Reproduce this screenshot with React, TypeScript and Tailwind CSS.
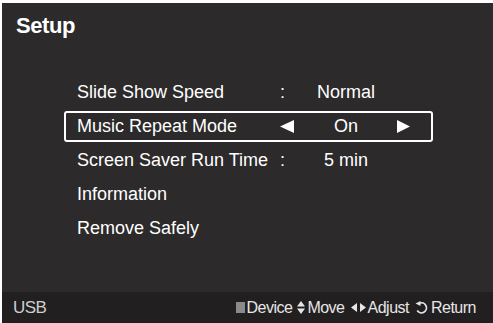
import React from "react";

const font = { fontFamily: '"Liberation Sans", Arial, sans-serif' };

function Row({ label, sep, value, selected }: { label: string; sep?: "colon" | "arrows"; value?: string; selected?: boolean }) {
  return (
    <div
      className={`flex h-[31px] items-center rounded-[3px] border-2 pl-[11px] ${selected ? "border-white" : "border-transparent"}`}
    >
      <div className="w-[203px] whitespace-nowrap">{label}</div>
      {sep === "colon" && <div className="w-[15px]">:</div>}
      {sep === "arrows" && (
        <div className="flex w-[15px] items-center">
          <svg width="15" height="13" viewBox="0 0 15 13">
            <polygon points="0,6.5 14,0 14,13" fill="white" />
          </svg>
        </div>
      )}
      {value && <div className="w-[102px] text-center">{value}</div>}
      {sep === "arrows" && (
        <div className="flex w-[13px] items-center">
          <svg width="13" height="13" viewBox="0 0 13 13">
            <polygon points="0,0 13,6.5 0,13" fill="white" />
          </svg>
        </div>
      )}
    </div>
  );
}

export default function App() {
  return (
    <div className="h-[323px] w-[493px] border-l-[2px] border-t-[3px] border-white" style={font}>
      <div className="flex h-[320px] flex-col bg-[#2c2a2b] text-white">
        <div className="h-[60px] pl-[14px] pt-[6px] text-[22px] font-bold tracking-[-0.4px]">Setup</div>
        <div className="ml-[62px] flex w-[369px] flex-col gap-[3px] pt-[14px] text-[18px]">
          <Row label="Slide Show Speed" sep="colon" value="Normal" />
          <Row label="Music Repeat Mode" sep="arrows" value="On" selected />
          <Row label="Screen Saver Run Time" sep="colon" value="5 min" />
          <Row label="Information" />
          <Row label="Remove Safely" />
        </div>
        <div className="flex-1" />
        <div className="flex h-[31px] items-center bg-[#221f20] pl-[11px] pr-[17px] text-[16px] tracking-[-0.5px] text-[#e6e6e6]">
          <div className="text-[17px] text-[#cfcfcf]">USB</div>
          <div className="flex-1" />
          <div className="flex items-center">
            <div className="mr-[1px] h-[11px] w-[9px] bg-[#8a8a8a]" />
            <span>Device</span>
            <svg className="ml-[5px] mr-[2px]" width="8" height="13" viewBox="0 0 8 13">
              <polygon points="4,0 8,5.5 0,5.5" fill="#e6e6e6" />
              <polygon points="0,7.5 8,7.5 4,13" fill="#e6e6e6" />
            </svg>
            <span>Move</span>
            <svg className="ml-[6px] mr-[1px]" width="16" height="9" viewBox="0 0 16 9">
              <polygon points="0,4.5 6,0 6,9" fill="#e6e6e6" />
              <polygon points="9,0 15,4.5 9,9" fill="#e6e6e6" />
            </svg>
            <span>Adjust</span>
            <svg className="ml-[6px] mr-[3px]" width="13" height="13" viewBox="0 0 13 13">
              <path d="M4.5 2.2 A5 5 0 1 1 2.2 9.5" fill="none" stroke="#e6e6e6" strokeWidth="1.7" />
              <polygon points="0.5,2.6 5.5,0 5.5,5" fill="#e6e6e6" />
            </svg>
            <span>Return</span>
          </div>
        </div>
      </div>
    </div>
  );
}
